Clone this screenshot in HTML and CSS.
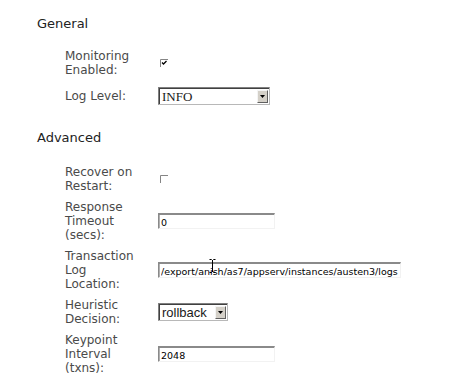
FILE: index.html
```html
<!DOCTYPE html>
<html lang="en">
<head>
<meta charset="utf-8">
<title>Transaction Service</title>
<link rel="stylesheet" href="styles.css">
</head>
<body>
<div class="page">
  <h2 class="section-title">General</h2>
  <div class="form form-general">
    <div class="label">Monitoring Enabled:</div>
    <div class="field">
      <span class="check">
        <svg width="8" height="8" viewBox="0 0 8 8"><path d="M0.5 8V0.5H8" stroke="#858585" fill="none"/><path d="M2 3.5l1.5 1.5l3-3" stroke="#000" stroke-width="1.3" fill="none"/></svg>
      </span>
    </div>

    <div class="label">Log Level:</div>
    <div class="field">
      <div class="select select-info">
        <span class="select-value serif">INFO</span>
        <span class="select-btn"><svg width="5" height="3" viewBox="0 0 5 3"><path d="M0 0h5L2.5 3z" fill="#000"/></svg></span>
      </div>
    </div>
  </div>

  <h2 class="section-title section-gap">Advanced</h2>
  <div class="form form-advanced">
    <div class="label">Recover on Restart:</div>
    <div class="field">
      <span class="check">
        <svg width="8" height="8" viewBox="0 0 8 8"><path d="M0.5 8V0.5H8" stroke="#858585" fill="none"/></svg>
      </span>
    </div>

    <div class="label">Response Timeout (secs):</div>
    <div class="field"><input class="text-input input-short" type="text" value="0"></div>

    <div class="label">Transaction Log Location:</div>
    <div class="field">
      <div class="input-wrap">
        <input class="text-input input-long" type="text" value="/export/anish/as7/appserv/instances/austen3/logs">
        <svg class="ibeam" width="7" height="14" viewBox="0 0 7 14"><path d="M0.5 0.5h2.2M4.3 0.5h2.2M3.5 1v12M0.5 13.5h2.2M4.3 13.5h2.2" stroke="#000" fill="none"/></svg>
      </div>
    </div>

    <div class="label">Heuristic Decision:</div>
    <div class="field">
      <div class="select select-rollback">
        <span class="select-value sans">rollback</span>
        <span class="select-btn"><svg width="5" height="3" viewBox="0 0 5 3"><path d="M0 0h5L2.5 3z" fill="#000"/></svg></span>
      </div>
    </div>

    <div class="label">Keypoint Interval (txns):</div>
    <div class="field"><input class="text-input input-short" type="text" value="2048"></div>
  </div>
</div>
</body>
</html>
```
FILE: styles.css
```css
html, body {
  margin: 0;
  padding: 0;
  background: #ffffff;
}

.page {
  padding-top: 16px;
  font-family: "DejaVu Sans", Verdana, sans-serif;
}

.section-title {
  margin: 0 0 17px 37px;
  font-size: 13px;
  line-height: 16px;
  font-weight: normal;
  color: #222222;
}

.section-gap {
  margin-top: 25px;
  margin-bottom: 19px;
}

.form {
  display: grid;
  grid-template-columns: 75px auto;
  column-gap: 18px;
  align-items: center;
  margin-left: 65px;
}

.form-general {
  row-gap: 10px;
}

.form-advanced {
  row-gap: 7px;
}

.label {
  font-size: 12px;
  line-height: 14px;
  color: #4a4a4a;
}

.field {
  display: flex;
  align-items: center;
}

.check {
  display: block;
  width: 8px;
  height: 8px;
  margin-left: 2px;
}

.check svg {
  display: block;
}

.select {
  display: flex;
  align-items: center;
  justify-content: space-between;
  box-sizing: border-box;
  height: 18px;
  border: 1px solid;
  border-color: #808080 #b8b8b8 #b8b8b8 #808080;
  box-shadow: inset 1px 1px 0 #404040;
  background: #ffffff;
  padding: 0 1px 0 3px;
}

.select-info {
  width: 112px;
}

.select-rollback {
  width: 70px;
}

.select-value {
  color: #1a1a1a;
  line-height: 15px;
}

.serif {
  font-family: "Liberation Serif", "Times New Roman", serif;
  font-size: 13px;
}

.sans {
  font-family: "Liberation Sans", Arial, sans-serif;
  font-size: 13px;
}

.select-btn {
  display: flex;
  align-items: center;
  justify-content: center;
  box-sizing: border-box;
  width: 11px;
  height: 13px;
  background: #d4d0c8;
  border: 1px solid;
  border-color: #f4f4f4 #606060 #606060 #f4f4f4;
}

.select-btn svg {
  display: block;
}

.text-input {
  display: block;
  box-sizing: border-box;
  height: 16px;
  margin: 0;
  padding: 1px 2px 0;
  border-style: solid;
  border-width: 2px 1px 1px 1px;
  border-color: #8a8a8a #f2f2f2 #f2f2f2 #8a8a8a;
  box-shadow: inset 1px 0 0 #b0b0b0;
  outline: none;
  background: #ffffff;
  font-family: "DejaVu Sans", Verdana, sans-serif;
  font-size: 9.5px;
  color: #000000;
}

.input-short {
  width: 117px;
}

.input-long {
  width: 243px;
}

.input-wrap {
  position: relative;
}

.ibeam {
  position: absolute;
  left: 51px;
  top: -3px;
}
```
